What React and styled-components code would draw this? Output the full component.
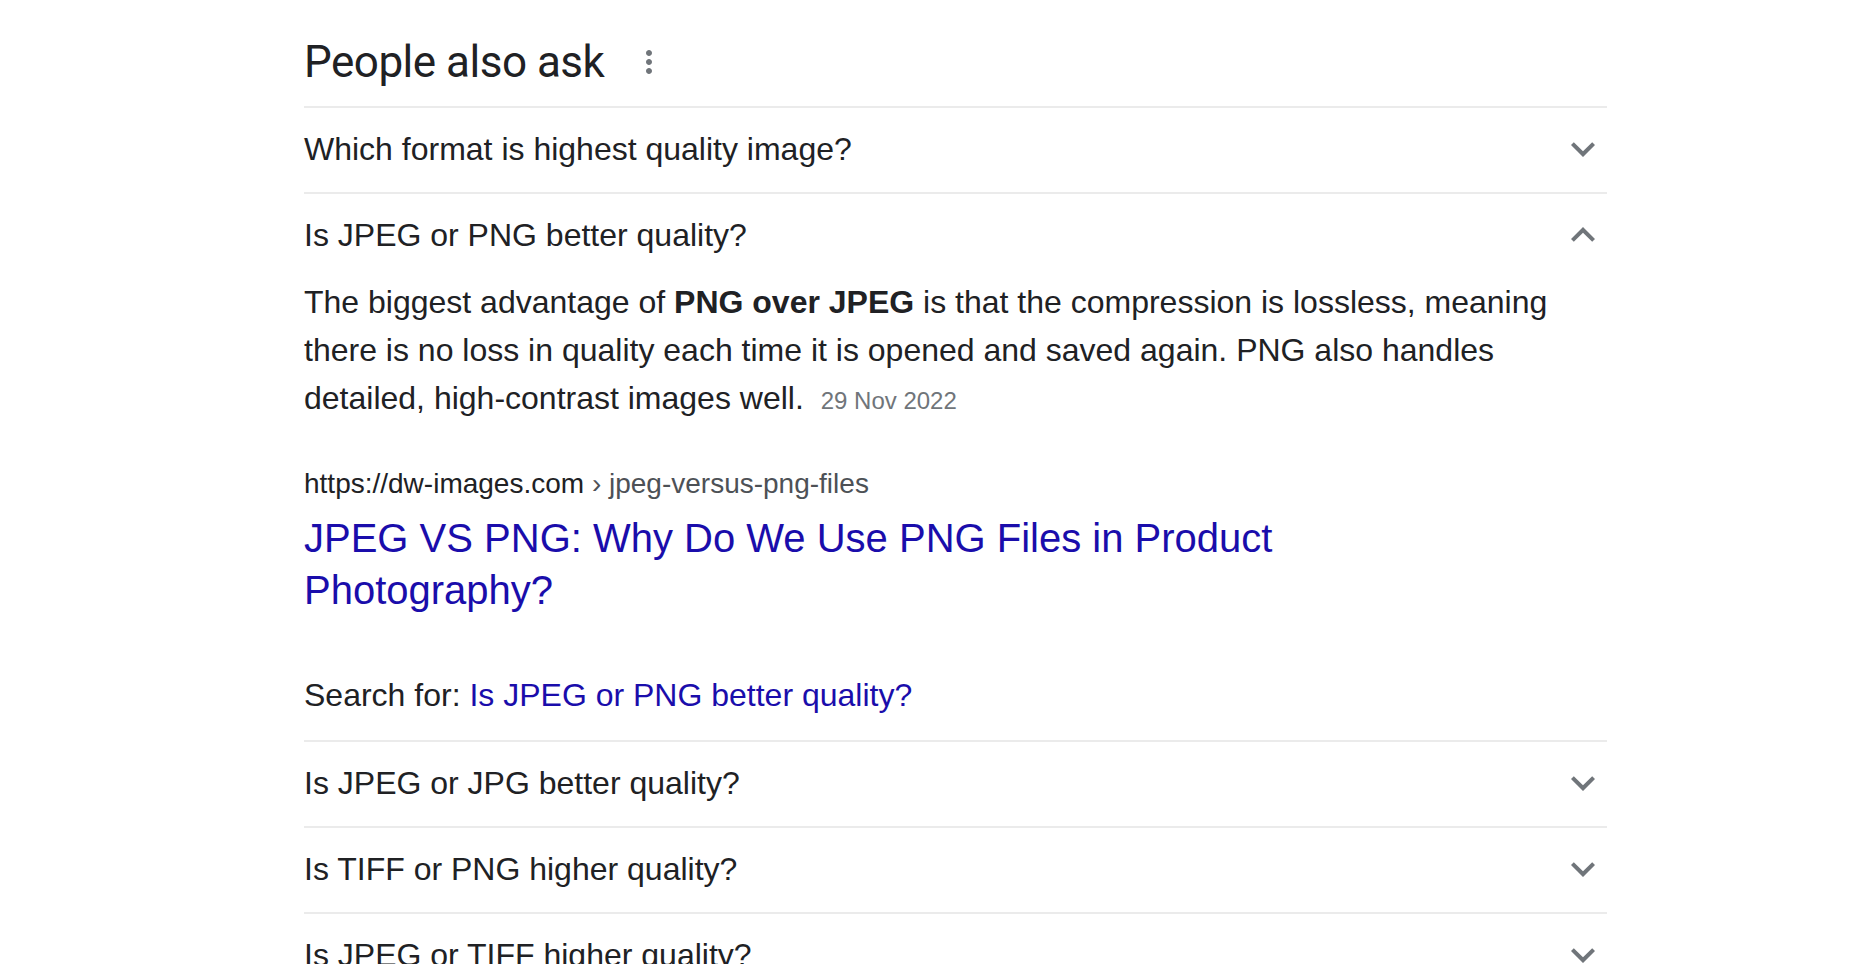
import React, { useState } from "react"
import styled, { createGlobalStyle } from "styled-components"

const GlobalStyle = createGlobalStyle`
  html, body {
    margin: 0;
    padding: 0;
    background: #fff;
  }
  body {
    height: 964px;
    overflow: hidden;
    font-family: "Liberation Sans", Arial, sans-serif;
    color: #202124;
  }
`

const Page = styled.main`
  padding-left: 304px;
`

const Section = styled.section`
  width: 1303px;
`

const Header = styled.div`
  display: flex;
  align-items: center;
  padding: 36px 0 18px;
`

const Heading = styled.h2`
  margin: 0;
  font-family: Roboto, "Liberation Sans", sans-serif;
  font-weight: 400;
  font-size: 44px;
  line-height: 52px;
  letter-spacing: -0.5px;
  color: #202124;
`

const IconButton = styled.button`
  display: flex;
  align-items: center;
  justify-content: center;
  width: ${(p) => p.size}px;
  height: ${(p) => p.size}px;
  padding: 0;
  margin-left: ${(p) => p.offset || 0}px;
  border: 0;
  background: none;
  color: #70757a;
  cursor: pointer;
  flex-shrink: 0;
`

const Question = styled.div`
  border-top: 2px solid #ebebeb;
`

const QuestionHead = styled.div`
  display: flex;
  align-items: center;
  justify-content: space-between;
  height: 84px;
  padding-bottom: 3px;
  box-sizing: border-box;
  font-size: 32px;
  line-height: 48px;
  cursor: pointer;
`

const Answer = styled.div`
  padding-bottom: 21px;
`

const Snippet = styled.p`
  margin: 0;
  font-size: 32px;
  line-height: 48px;

  b {
    font-weight: 700;
  }
`

const SnippetDate = styled.span`
  margin-left: 8px;
  font-size: 24px;
  color: #70757a;
`

const Source = styled.div`
  margin-top: 39px;
`

const Cite = styled.div`
  font-size: 28px;
  line-height: 40px;
  color: #202124;

  span {
    color: #4d5156;
  }
`

const ResultTitle = styled.a`
  display: block;
  max-width: 1200px;
  margin-top: 8px;
  font-size: 40px;
  line-height: 52px;
  color: #1a0dab;
  text-decoration: none;
`

const SearchFor = styled.div`
  margin-top: 55px;
  font-size: 32px;
  line-height: 48px;

  a {
    color: #1a0dab;
    text-decoration: none;
  }
`

const MoreVert = () => (
  <svg width="36" height="36" viewBox="0 0 24 24" fill="currentColor">
    <path d="M12 8c1.1 0 2-.9 2-2s-.9-2-2-2-2 .9-2 2 .9 2 2 2zm0 2c-1.1 0-2 .9-2 2s.9 2 2 2 2-.9 2-2-.9-2-2-2zm0 6c-1.1 0-2 .9-2 2s.9 2 2 2 2-.9 2-2-.9-2-2-2z" />
  </svg>
)

const Chevron = ({ open }) => (
  <svg width="48" height="48" viewBox="0 0 24 24" fill="#70757a">
    {open ? (
      <path d="M12 8l-6 6 1.41 1.41L12 10.83l4.59 4.58L18 14z" />
    ) : (
      <path d="M16.59 8.59L12 13.17 7.41 8.59 6 10l6 6 6-6z" />
    )}
  </svg>
)

const questions = [
  "Which format is highest quality image?",
  "Is JPEG or PNG better quality?",
  "Is JPEG or JPG better quality?",
  "Is TIFF or PNG higher quality?",
  "Is JPEG or TIFF higher quality?",
]

const AnswerPanel = () => (
  <Answer>
    <Snippet>
      The biggest advantage of <b>PNG over JPEG</b> is that the compression is
      lossless, meaning there is no loss in quality each time it is opened and
      saved again. PNG also handles detailed, high-contrast images well.{" "}
      <SnippetDate>29 Nov 2022</SnippetDate>
    </Snippet>
    <Source>
      <Cite>
        https://dw-images.com<span> › jpeg-versus-png-files</span>
      </Cite>
      <ResultTitle href="#">
        JPEG VS PNG: Why Do We Use PNG Files in Product Photography?
      </ResultTitle>
    </Source>
    <SearchFor>
      Search for: <a href="#">Is JPEG or PNG better quality?</a>
    </SearchFor>
  </Answer>
)

const App = () => {
  const [openIndex, setOpenIndex] = useState(1)

  return (
    <Page>
      <GlobalStyle />
      <Section>
        <Header>
          <Heading>People also ask</Heading>
          <IconButton size={36} offset={27} aria-label="More options">
            <MoreVert />
          </IconButton>
        </Header>

        {questions.map((q, i) => (
          <Question key={q}>
            <QuestionHead onClick={() => setOpenIndex(openIndex === i ? -1 : i)}>
              <span>{q}</span>
              <Chevron open={openIndex === i} />
            </QuestionHead>
            {openIndex === i ? <AnswerPanel /> : null}
          </Question>
        ))}
      </Section>
    </Page>
  )
}

export default App
